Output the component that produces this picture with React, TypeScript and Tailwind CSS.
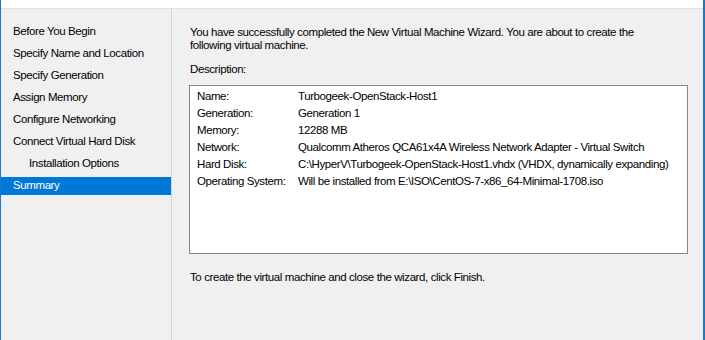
const steps = [
  { label: "Before You Begin" },
  { label: "Specify Name and Location" },
  { label: "Specify Generation" },
  { label: "Assign Memory" },
  { label: "Configure Networking" },
  { label: "Connect Virtual Hard Disk" },
  { label: "Installation Options", sub: true },
  { label: "Summary", active: true },
];

const details: [string, string][] = [
  ["Name:", "Turbogeek-OpenStack-Host1"],
  ["Generation:", "Generation 1"],
  ["Memory:", "12288 MB"],
  ["Network:", "Qualcomm Atheros QCA61x4A Wireless Network Adapter - Virtual Switch"],
  ["Hard Disk:", "C:\\HyperV\\Turbogeek-OpenStack-Host1.vhdx (VHDX, dynamically expanding)"],
  ["Operating System:", "Will be installed from E:\\ISO\\CentOS-7-x86_64-Minimal-1708.iso"],
];

export default function App() {
  return (
    <div
      className="w-[705px] h-[340px] overflow-hidden bg-[#f0f0f0] text-[11.5px] tracking-[-0.4px] text-black border-l border-r-2 border-[#1979ca] flex flex-col"
      style={{ fontFamily: '"Liberation Sans", Arial, sans-serif' }}
    >
      {/* header strip */}
      <div className="h-[9px] bg-white border-b border-[#dfdfdf] shrink-0" />

      <div className="flex flex-1 min-h-0">
        {/* Steps */}
        <div className="w-[171px] shrink-0 pt-[14px] border-r border-[#d3d3d3] mr-[1px] flex flex-col gap-[4px]">
          {steps.map((s) => (
            <div
              key={s.label}
              className={
                "h-[18px] flex items-center whitespace-nowrap " +
                (s.sub ? "pl-[28px] " : "pl-[12px] ") +
                (s.active ? "bg-[#0078d7] text-white" : "")
              }
            >
              {s.label}
            </div>
          ))}
        </div>

        {/* Summary content */}
        <div className="flex-1 pl-[17px] pr-[16px] pt-[17px]">
          <p className="leading-[13px] w-[462px]">
            You have successfully completed the New Virtual Machine Wizard. You are about to create the following virtual machine.
          </p>
          <p className="mt-[11px] leading-[13px]">Description:</p>

          <div className="mt-[9px] ml-[-1px] w-[499px] h-[169px] bg-white border border-[#828790] pt-[2px] pl-[7px]">
            {details.map(([k, v]) => (
              <div key={k} className="flex h-[17px] items-center whitespace-nowrap">
                <span className="w-[101px] shrink-0">{k}</span>
                <span>{v}</span>
              </div>
            ))}
          </div>

          <p className="mt-[17px] leading-[13px]">
            To create the virtual machine and close the wizard, click Finish.
          </p>
        </div>
      </div>
    </div>
  );
}
